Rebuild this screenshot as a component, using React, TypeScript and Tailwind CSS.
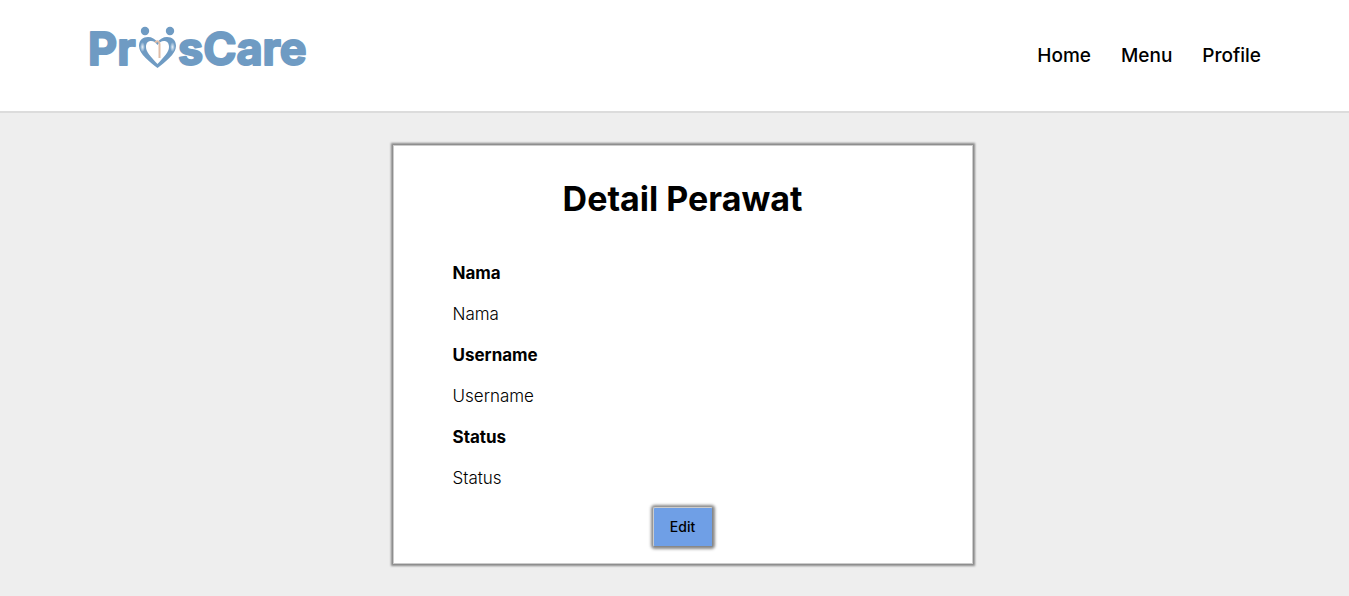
const navItems = ['Home', 'Menu', 'Profile'];

const details = [
  { label: 'Nama', value: 'Nama' },
  { label: 'Username', value: 'Username' },
  { label: 'Status', value: 'Status' },
];

function Logo() {
  return (
    <svg
      className="h-[64px] w-[230px] font-['Inter',sans-serif] font-bold"
      viewBox="0 -4 230 64"
      role="img"
      aria-label="PriisCare"
    >
      <defs>
        <radialGradient id="shine">
          <stop offset="0" stopColor="#e6eff7" />
          <stop offset="1" stopColor="#6f9bc3" />
        </radialGradient>
      </defs>
      <g fill="#6f9bc3" stroke="#6f9bc3" strokeWidth="2" strokeLinejoin="round" fontSize="45">
        <text x="0" y="43">Pr</text>
        <text x="90" y="43">sCare</text>
      </g>
      <circle cx="57" cy="9" r="4.2" fill="#6f9bc3" />
      <circle cx="82" cy="9" r="4.2" fill="#6f9bc3" />
      <path
        fillRule="evenodd"
        fill="#6f9bc3"
        d="M69.500 46C62 40 51 32 51 24C51 18 55 15 60 15C64 15 67 17 69.500 20C72 17 75 15 79 15C84 15 88 18 88 24C88 32 77 40 69.500 46ZM69.500 42C76 35 81 30 81 25C81 21 79 19 76 19C73 19 71 21 69.500 23C68 21 66 19 63 19C60 19 58 21 58 25C58 30 63 35 69.500 42Z"
      />
      <ellipse cx="54.500" cy="25" rx="2.500" ry="5" fill="url(#shine)" />
      <ellipse cx="84.500" cy="25" rx="2.500" ry="5" fill="url(#shine)" />
      <path d="M67 20.500C69 18.500 71.500 19 71.500 22V36" fill="none" stroke="#dfbda8" strokeWidth="2" />
    </svg>
  );
}

export default function App() {
  return (
    <div className="min-h-screen bg-[#eeeeee] font-['Inter','Liberation_Sans',sans-serif] text-black">
      <header className="flex items-center justify-between border-b-2 border-[#dcdcdc] bg-white px-[88px] pt-[18px] pb-[29px]">
        <a href="#" aria-label="PriisCare">
          <Logo />
        </a>
        <nav className="mt-3 flex gap-[30px] text-[19px] leading-7 font-medium">
          {navItems.map((item) => (
            <a key={item} href="#">
              {item}
            </a>
          ))}
        </nav>
      </header>
      <main className="flex justify-center py-8 pl-4">
        <section className="w-full max-w-[580px] border border-[#cccccc] bg-white px-[59px] pt-[27px] pb-4 shadow-[0_0_2px_2px_#888888]">
          <h1 className="text-center text-[34px] leading-[52px] font-bold">Detail Perawat</h1>
          <dl className="mt-9 text-[17px] leading-6">
            {details.map(({ label, value }) => (
              <div key={label}>
                <dt className="mb-[17px] font-bold">{label}</dt>
                <dd className="mb-[17px] font-light">{value}</dd>
              </div>
            ))}
          </dl>
          <button
            type="button"
            className="mx-auto block h-10 w-[60px] rounded-xs border border-t-[#cccccc] border-r-[#888888] border-b-[#888888] border-l-[#cccccc] bg-[#6f9fe6] text-sm font-medium shadow-[0_0_3px_2px_#888888]"
          >
            Edit
          </button>
        </section>
      </main>
    </div>
  );
}
